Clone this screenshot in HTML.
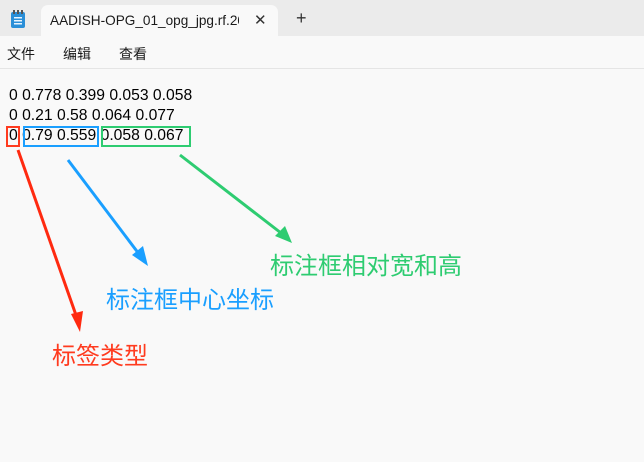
<!DOCTYPE html>
<html><head><meta charset="utf-8"><style>
body{margin:0;width:644px;height:462px;background:#f9f9f9;position:relative;overflow:hidden;font-family:"Liberation Sans","Noto Sans CJK SC",sans-serif;}
.tabbar{position:absolute;left:0;top:0;width:644px;height:36px;background:#ebebeb;}
.tab{position:absolute;left:41px;top:5px;width:237px;height:31px;background:#f9f9f9;border-radius:7px 7px 0 0;}
.tab span{position:absolute;left:9px;top:8px;font-size:13.6px;color:#1a1a1a;white-space:nowrap;width:189px;overflow:hidden;}
.x{position:absolute;left:213px;top:6px;font-size:15px;color:#333;}
.plus{position:absolute;left:296px;top:8px;font-size:18px;color:#333;}
.menu{position:absolute;top:44px;font-size:14px;color:#1a1a1a;font-family:"Noto Sans CJK SC",sans-serif;}
.sep{position:absolute;left:0;top:68px;width:644px;height:1px;background:#e5e5e5;}
.line{position:absolute;left:9px;font-size:15.7px;color:#000;white-space:pre;}
.box{position:absolute;border:2px solid;box-sizing:border-box;}
.lbl{position:absolute;font-size:24px;font-family:"Noto Sans CJK SC",sans-serif;line-height:1;white-space:nowrap;}
</style></head><body>
<div class="tabbar">
<svg style="position:absolute;left:10px;top:9px" width="16" height="20" viewBox="0 0 16 20"><rect x="1" y="3" width="14" height="16" rx="2" fill="#2a8fd8"/><rect x="3" y="1" width="2" height="4" fill="#555"/><rect x="7" y="1" width="2" height="4" fill="#555"/><rect x="11" y="1" width="2" height="4" fill="#555"/><rect x="4" y="8" width="8" height="1.5" fill="#e8f4ff"/><rect x="4" y="11" width="8" height="1.5" fill="#e8f4ff"/><rect x="4" y="14" width="8" height="1.5" fill="#e8f4ff"/></svg>
<div class="tab"><span>AADISH-OPG_01_opg_jpg.rf.200303</span><div class="x">✕</div></div>
<div class="plus">+</div>
</div>
<div class="menu" style="left:7px">文件</div>
<div class="menu" style="left:63px">编辑</div>
<div class="menu" style="left:119px">查看</div>
<div class="sep"></div>
<div class="line" style="top:87px">0 0.778 0.399 0.053 0.058</div>
<div class="line" style="top:107px">0 0.21 0.58 0.064 0.077</div>
<div class="line" style="top:127px">0 0.79 0.559 0.058 0.067</div>
<div class="box" style="left:6px;top:126px;width:14px;height:21px;border-color:#ff3b1f"></div>
<div class="box" style="left:23px;top:126px;width:76px;height:21px;border-color:#1a9fff"></div>
<div class="box" style="left:101px;top:126px;width:90px;height:21px;border-color:#2ecc71"></div>
<svg style="position:absolute;left:0;top:0" width="644" height="462">
<line x1="18" y1="150" x2="77" y2="318" stroke="#ff2a10" stroke-width="3"/><polygon points="71,314 83,311 80,332" fill="#ff2a10"/>
<line x1="68" y1="160" x2="139" y2="254" stroke="#1a9fff" stroke-width="3"/><polygon points="132,255 143,246 148,266" fill="#1a9fff"/>
<line x1="180" y1="155" x2="281" y2="233" stroke="#2ecc71" stroke-width="3"/><polygon points="275,236 285,226 292,243" fill="#2ecc71"/>
</svg>
<div class="lbl" style="left:270px;top:252px;color:#2ecc71">标注框相对宽和高</div>
<div class="lbl" style="left:106px;top:286px;color:#1a9fff">标注框中心坐标</div>
<div class="lbl" style="left:52px;top:342px;color:#ff3b1f">标签类型</div>
</body></html>
